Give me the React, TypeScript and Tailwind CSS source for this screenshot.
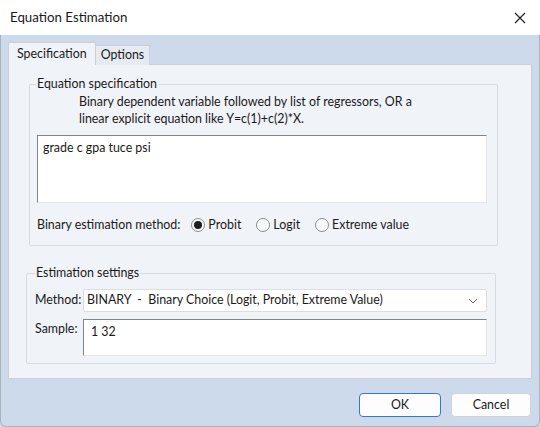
import React from 'react';

function Radio({ label, checked }: { label: string; checked?: boolean }) {
  return (
    <label className="flex items-center gap-[3px]">
      <span className="w-[14px] h-[14px] rounded-full border border-[#8a8f96] bg-[#f7f8fa] flex items-center justify-center">
        {checked && <span className="w-[8px] h-[8px] rounded-full bg-[#1f1f1f]" />}
      </span>
      <span>{label}</span>
    </label>
  );
}

export default function App() {
  return (
    <div
      className="w-[540px] h-[427px] bg-[#ccdaeb] flex flex-col overflow-hidden text-[12.4px] text-[#1a1a1a]"
      style={{ fontFamily: '"Segoe UI", Lato, "Noto Sans", sans-serif' }}
    >
      {/* title bar */}
      <div className="h-[35px] bg-white flex items-center justify-between pl-[10px] pr-[12px] shrink-0">
        <span className="text-[13.3px]">Equation Estimation</span>
        <svg width="12" height="12" viewBox="0 0 12 12" className="mr-[2px]">
          <path d="M1 1 L11 11 M11 1 L1 11" stroke="#222" strokeWidth="1.2" />
        </svg>
      </div>

      <div className="flex-1 flex flex-col border-x border-b border-[#aab4c0] rounded-b-[6px] px-[7px] pt-[7px]">
        {/* tabs */}
        <div className="flex items-end h-[23px] relative z-10">
          <div className="h-[23px] px-[8px] flex items-center bg-[#f0f3f8] border border-b-0 border-[#c9d0d9]">
            Specification
          </div>
          <div className="h-[20px] px-[5px] flex items-center bg-[#e6ebf2] border border-l-0 border-b-0 border-[#c9d0d9]">
            Options
          </div>
        </div>

        {/* panel */}
        <div className="h-[315px] -mt-px bg-[#f0f3f8] border border-[#c9d0d9] pl-[20px] pr-[33px] pt-[12px]">
          <fieldset className="border border-[#d6dce4] rounded-[2px] pl-[7px] pr-[10px] pb-[12px]">
            <legend className="px-[1px] ml-[-1px] leading-[14px]">Equation specification</legend>
            <div className="pl-[42px] leading-[17px] mt-[2px]">
              <div>Binary dependent variable followed by list of regressors, OR a</div>
              <div>linear explicit equation like Y=c(1)+c(2)*X.</div>
            </div>
            <div className="mt-[8px] h-[68px] bg-white border-t border-l border-[#7f858c] border-r border-r-[#e3e6ea] border-b border-b-[#e3e6ea] px-[5px] pt-[3px]">
              grade c gpa tuce psi
            </div>
            <div className="flex items-center mt-[14px] h-[16px]">
              <span className="mr-[11px]">Binary estimation method:</span>
              <div className="flex items-center gap-[15px]">
                <Radio label="Probit" checked />
                <Radio label="Logit" />
                <Radio label="Extreme value" />
              </div>
            </div>
          </fieldset>

          <fieldset className="mt-[20px] ml-[-3px] mr-[2px] border border-[#d6dce4] rounded-[2px] px-[8px] pb-[7px]">
            <legend className="px-[1px] leading-[14px]">Estimation settings</legend>
            <div className="flex flex-col gap-[7px] mt-[9px]">
              <div className="flex items-center">
                <span className="w-[48px]">Method:</span>
                <div className="flex-1 h-[23px] bg-white border border-[#dadde2] rounded-[2px] flex items-center justify-between pl-[3px] pr-[8px]">
                  <span className="whitespace-pre">BINARY  -  Binary Choice (Logit, Probit, Extreme Value)</span>
                  <svg width="10" height="6" viewBox="0 0 10 6">
                    <path d="M1 1 L5 5 L9 1" fill="none" stroke="#666" strokeWidth="1" />
                  </svg>
                </div>
              </div>
              <div className="flex items-start">
                <span className="w-[48px] pt-[1px]">Sample:</span>
                <div className="flex-1 h-[37px] bg-white border-t border-l border-[#7f858c] border-r border-r-[#e3e6ea] border-b border-b-[#e3e6ea] px-[7px] pt-[3px]">
                  1 32
                </div>
              </div>
            </div>
          </fieldset>
        </div>

        {/* buttons */}
        <div className="flex justify-end gap-[10px] mt-[14px] pr-[1px]">
          <button className="w-[82px] h-[24px] bg-[#fdfdfd] border border-[#2f7bc4] rounded-[4px]">OK</button>
          <button className="w-[80px] h-[24px] bg-[#fdfdfd] border border-[#d0d4d9] rounded-[4px]">Cancel</button>
        </div>
      </div>
    </div>
  );
}
